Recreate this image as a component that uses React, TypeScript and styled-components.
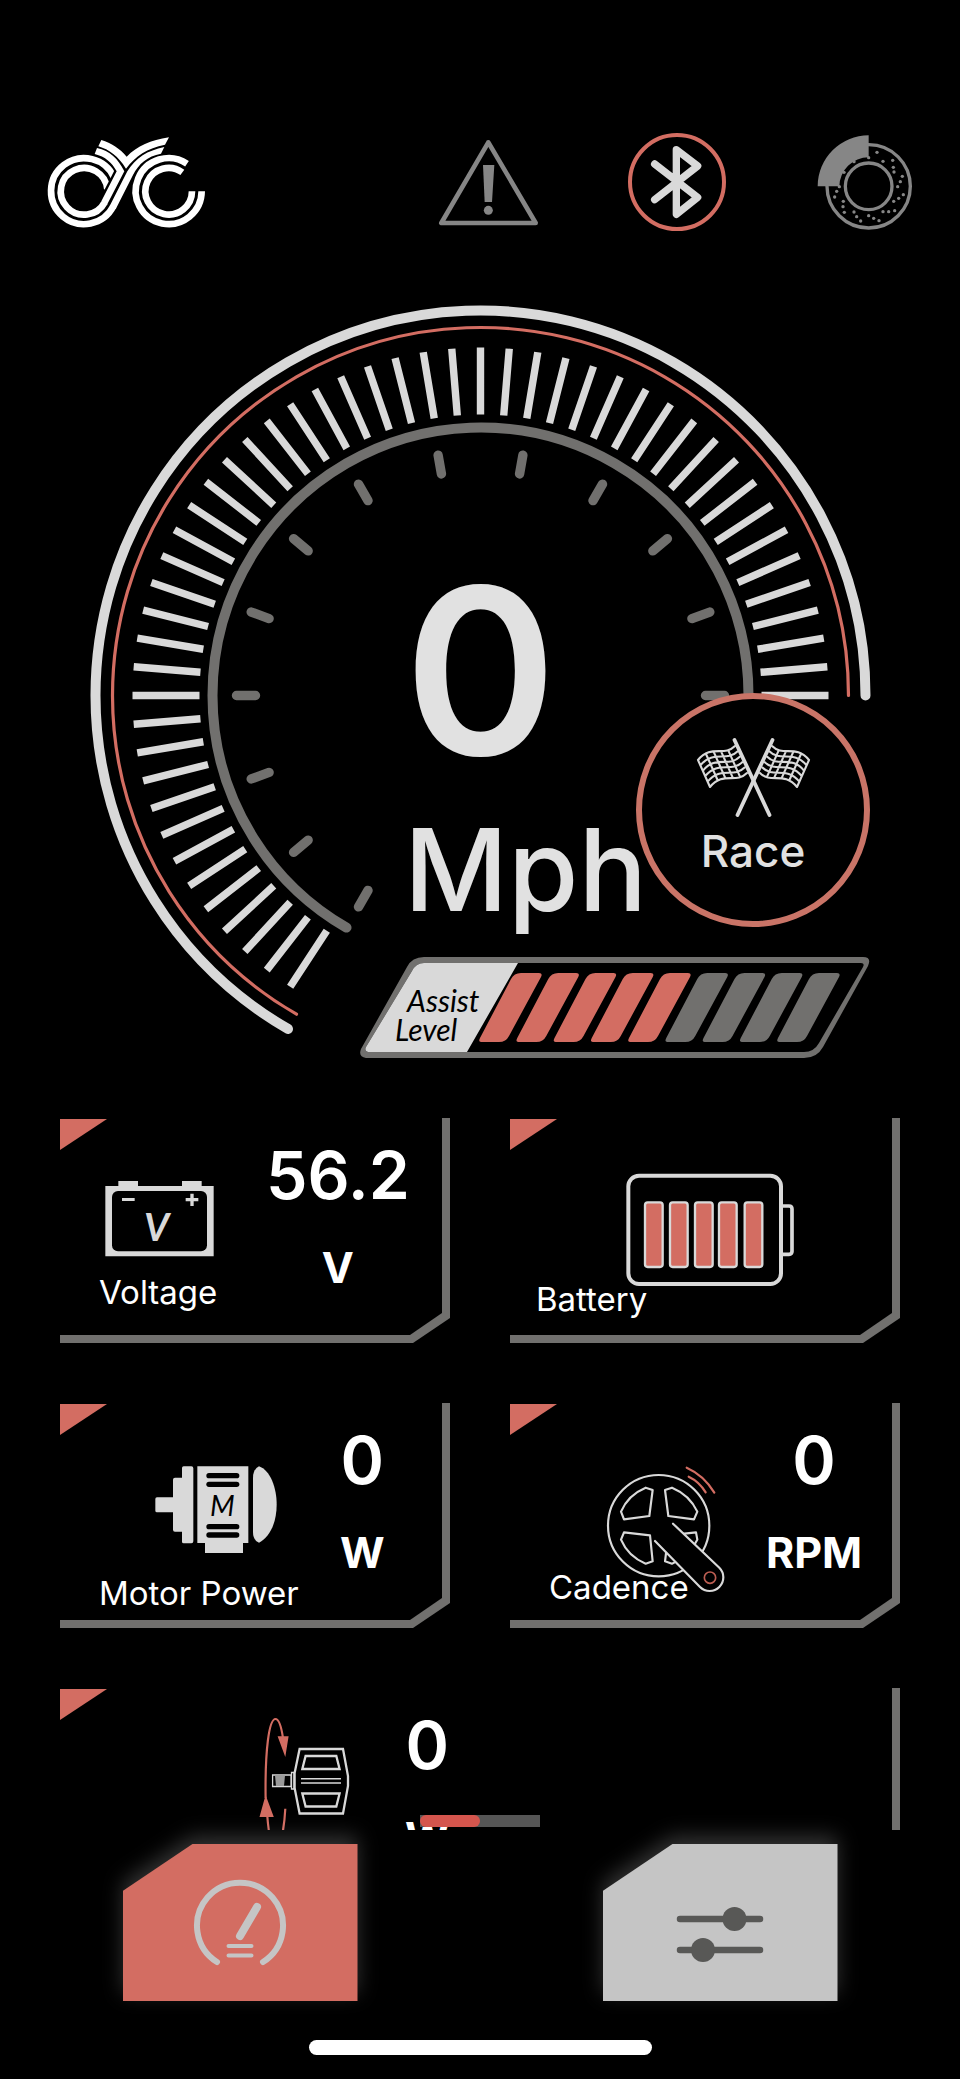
import React from "react";
import styled, { createGlobalStyle } from "styled-components";

const color = {
  bg: "#000000",
  accent: "#d36d62",
  accentSoft: "#c97467",
  light: "#d9d9d9",
  text: "#e1e1e1",
  white: "#ffffff",
  grey: "#71706e",
  icon: "#868686",
  tile: "#c5c5c5",
  dark: "#585856",
};

const GlobalStyle = createGlobalStyle`
  *, *::before, *::after { box-sizing: border-box; }
  html, body { margin: 0; background: ${color.bg}; }
  body { color: ${color.white}; font-family: Inter, "Liberation Sans", sans-serif; }
  button { margin: 0; padding: 0; border: 0; background: none; color: inherit; font: inherit; cursor: pointer; }
  svg { display: block; overflow: visible; flex: none; }
`;

/* ---------- page ---------- */

const Screen = styled.div`
  display: flex;
  flex-direction: column;
  height: 100vh;
  min-height: 1600px;
  overflow: hidden;
  background: ${color.bg};
`;

const Header = styled.header`
  display: flex;
  align-items: center;
  justify-content: space-between;
  padding: 133px 45px 0 47px;
`;

const StatusGroup = styled.div`
  display: flex;
  gap: 91px;
`;

const GaugeArea = styled.section`
  position: relative;
  width: 780px;
  max-width: 100%;
  height: 753px;
  margin: 74px auto 60px;
  flex: none;
  display: grid;
  > * { grid-area: 1 / 1; }
`;

const Readout = styled.div`
  display: flex;
  flex-direction: column;
  gap: 39px;
  padding: 266px 0 0 314px;
  color: ${color.text};
  font-weight: 500;
`;

const Speed = styled.output`
  font-size: 232px;
  font-weight: 600;
  line-height: 200px;
`;

const SpeedUnit = styled.span`
  font-size: 114px;
  line-height: 120px;
`;

const ModeButton = styled.button`
  position: absolute;
  right: 0;
  bottom: 131px;
  display: flex;
  flex-direction: column;
  align-items: center;
  gap: 10px;
  width: 234px;
  height: 234px;
  padding-top: 38px;
  border: 6px solid ${color.accentSoft};
  border-radius: 50%;
  background: ${color.bg};
  color: ${color.text};
  font-size: 44px;
  font-weight: 500;
  line-height: 44px;
`;

const Assist = styled.div`
  position: absolute;
  right: 0;
  bottom: 0;
  width: 510px;
`;

const AssistLabel = styled.span`
  position: absolute;
  top: 29px;
  left: 35px;
  color: #000;
  font: italic 400 30px/29px Lato, sans-serif;
  span { display: block; }
  span:first-child { padding-left: 12px; }
`;

const ListWrap = styled.main`
  position: relative;
  flex: 1;
  min-height: 0;
`;

const CardList = styled.div`
  display: grid;
  grid-template-columns: 1fr 1fr;
  grid-auto-rows: 225px;
  gap: 60px;
  height: 100%;
  padding: 0 60px;
  overflow-y: auto;
  scrollbar-width: none;
  &::-webkit-scrollbar { display: none; }
`;

const Card = styled.article<{ $wide?: boolean }>`
  position: relative;
  z-index: 0;
  display: flex;
  grid-column: ${(p) => (p.$wide ? "1 / -1" : "auto")};
  background: ${color.grey};
  clip-path: polygon(0 0, 100% 0, 100% calc(100% - 25px), calc(100% - 37px) 100%, 0 100%);

  &::before {
    content: "";
    position: absolute;
    z-index: -1;
    inset: 0 8px 8px 0;
    background: ${color.bg};
    clip-path: polygon(0 0, 100% 0, 100% calc(100% - 22px), calc(100% - 32px) 100%, 0 100%);
  }

  &::after {
    content: "";
    position: absolute;
    top: 1px;
    left: 0;
    width: 47px;
    height: 31px;
    background: ${color.accent};
    clip-path: polygon(0 0, 100% 0, 0 100%);
  }
`;

const Figure = styled.div<{ $width: number; $top: number; $left: number }>`
  display: flex;
  flex: none;
  flex-direction: column;
  width: ${(p) => p.$width}px;
  padding-top: ${(p) => p.$top}px;
  > svg { margin-left: ${(p) => p.$left}px; }
`;

const Label = styled.h2<{ $gap: number; $left?: number }>`
  position: relative;
  margin: ${(p) => p.$gap}px 0 0 ${(p) => p.$left ?? 39}px;
  font-size: 33px;
  font-weight: 400;
  line-height: 40px;
  white-space: nowrap;
`;

const Reading = styled.div`
  display: flex;
  flex-direction: column;
  align-items: center;
  gap: 37px;
  padding-top: 27px;
`;

const Value = styled.span`
  font-size: 66px;
  font-weight: 600;
  line-height: 60px;
`;

const Unit = styled.span`
  font-size: 43px;
  font-weight: 700;
  line-height: 50px;
`;

const ScrollProgress = styled.progress`
  position: absolute;
  bottom: 3px;
  left: 50%;
  width: 120px;
  height: 12px;
  transform: translateX(-50%);
  appearance: none;
  border: 0;
  &::-webkit-progress-bar { background: #565656; }
  &::-webkit-progress-value { background: #d4554d; border-radius: 6px; }
`;

const BottomNav = styled.nav`
  display: grid;
  grid-template-columns: 1fr 1fr;
  justify-items: center;
  padding: 14px 0 39px;
`;

const NavButton = styled.button`
  position: relative;
  filter: drop-shadow(0 -8px 10px rgba(255, 255, 255, 0.2));
`;

const NavTile = styled.span<{ $active?: boolean }>`
  display: flex;
  align-items: center;
  justify-content: center;
  width: 235px;
  height: 157px;
  background: ${(p) => (p.$active ? color.accent : color.tile)};
  clip-path: polygon(70px 0, 100% 0, 100% 100%, 0 100%, 0 47px);
`;

const HomeIndicator = styled.div`
  flex: none;
  width: 343px;
  height: 15px;
  margin: 0 auto 24px;
  border-radius: 8px;
  background: ${color.white};
`;

/* ---------- header icons ---------- */

const Logo = () => (
  <svg width="158" height="98" viewBox="51 39 474 294" role="img" aria-label="CYC">
    <g fill="none" stroke="#fff" strokeWidth="20">
      <path d="M252 172 A99 99 0 1 0 250 259" />
      <path d="M232 208 A70 70 0 1 0 224 247" />
      <path d="M471 131 A99 99 0 1 0 515 214" />
      <path d="M457 157 A70 70 0 1 0 486 214" />
    </g>
    <path d="M250 140 L252 154 L206 244 L236 244 L286 154 Z" fill="#000" />
    <g fill="#fff">
      <path d="M417 52 C362 60 322 78 290 110 C270 86 244 69 214 60 L205 79 C238 89 264 108 288 146 C316 108 352 84 405 74 Z" />
      <path d="M201 84 C240 92 264 116 283 154 L231 254 L214 244 L260 154 C246 128 226 110 194 102 Z" />
      <path d="M403 81 C352 92 318 112 292 154 L239 258 L257 268 L309 165 C326 132 352 108 393 101 Z" />
    </g>
  </svg>
);

const WarningIcon = () => (
  <svg width="98" height="98" viewBox="57 39 294 294" role="img" aria-label="Warning">
    <path d="M205 67 L64 309 H347 Z" fill="none" stroke={color.icon} strokeWidth="14" strokeLinejoin="round" />
    <path d="M189 135 H223 L216 246 H194 Z" fill={color.icon} />
    <circle cx="205" cy="271" r="13.5" fill={color.icon} />
  </svg>
);

const BluetoothIcon = () => (
  <svg width="98" height="98" viewBox="625 39 294 294" fill="none" role="img" aria-label="Bluetooth connected">
    <circle cx="772" cy="186" r="141" stroke={color.accent} strokeWidth="12" />
    <path
      d="M705 132 L834 232 L770 283 V89 L834 138 L705 239"
      stroke={color.light}
      strokeWidth="22"
      strokeLinecap="round"
      strokeLinejoin="round"
    />
  </svg>
);

const discHoles = [
  [1370, 97], [1388, 124], [1345, 113], [1417, 121], [1419, 142], [1421, 156], [1446, 169], [1440, 185],
  [1432, 200], [1449, 224], [1435, 235], [1420, 244], [1423, 272], [1405, 275], [1388, 275], [1376, 302],
  [1360, 295], [1345, 287], [1321, 303], [1309, 290], [1301, 276], [1272, 277], [1268, 260], [1269, 244],
  [1243, 231], [1249, 214], [1257, 200], [1271, 157], [1301, 125],
];

const BrakeIcon = () => (
  <svg width="98" height="98" viewBox="1190 39 294 294" role="img" aria-label="Brake">
    <g fill="none" stroke={color.icon} strokeWidth="10">
      <circle cx="1345" cy="199" r="125" />
      <circle cx="1345" cy="199" r="70" />
    </g>
    <path d="M1192 199 A153 153 0 0 1 1345 46 V112 A88 88 0 0 0 1257 199 Z" fill={color.icon} />
    {discHoles.map(([x, y]) => (
      <circle key={`${x}-${y}`} cx={x} cy={y} r="5" fill={color.icon} />
    ))}
  </svg>
);

/* ---------- speed dial ---------- */

const CX = 480.5;
const CY = 695.5;

const polar = (r: number, deg: number) => {
  const a = (deg * Math.PI) / 180;
  return [CX + r * Math.cos(a), CY - r * Math.sin(a)] as const;
};

/* Sweeps from three o'clock over the top down to the lower left. */
const sweep = (r: number) => {
  const [x1, y1] = polar(r, 0);
  const [x2, y2] = polar(r, 240);
  return `M${x1} ${y1} A${r} ${r} 0 1 0 ${x2} ${y2}`;
};

const spoke = (from: number, to: number, deg: number) => {
  const [x1, y1] = polar(from, deg);
  const [x2, y2] = polar(to, deg);
  return `M${x1} ${y1} L${x2} ${y2}`;
};

const majorTicks = Array.from({ length: 51 }, (_, i) => spoke(281, 348, (i * 90) / 19)).join(" ");
const minorTicks = Array.from({ length: 13 }, (_, i) => spoke(225, 244, i * 20)).join(" ");

const Dial = () => (
  <svg width="780" height="732" viewBox="90 305 780 732" fill="none" aria-hidden="true">
    <path d={sweep(385)} stroke={color.light} strokeWidth="10" strokeLinecap="round" />
    <path d={sweep(368)} stroke={color.accent} strokeWidth="3.2" strokeLinecap="round" />
    <path d={majorTicks} stroke={color.light} strokeWidth="7.4" />
    <path d={sweep(268)} stroke={color.grey} strokeWidth="10" strokeLinecap="round" />
    <path d={minorTicks} stroke={color.grey} strokeWidth="9.4" strokeLinecap="round" />
  </svg>
);

/* ---------- ride mode ---------- */

const steps = [0, 0.2, 0.4, 0.6, 0.8, 1];

const flagEdgePoint = (t: number) => {
  const u = 1 - t;
  const mix = (a: number, b: number, c: number, d: number) =>
    u * u * u * a + 3 * u * u * t * b + 3 * u * t * t * c + t * t * t * d;
  return [mix(771, 782, 795, 808), mix(746, 757, 744, 760)];
};

const flagRows = steps.map((s) => {
  const x = -12 * s;
  const y = 27 * s;
  return `M${771 + x} ${746 + y} C${782 + x} ${757 + y} ${795 + x} ${744 + y} ${808 + x} ${760 + y}`;
});

const flagColumns = steps.slice(1).map((t) => {
  const [x, y] = flagEdgePoint(t);
  return `M${x} ${y} l-12 27`;
});

const Flag = () => (
  <g>
    <path d="M771.5 740 L736.5 815" strokeWidth="3.8" />
    <path d={[...flagRows, ...flagColumns].join(" ")} strokeWidth="2.1" />
  </g>
);

const FlagsIcon = () => (
  <svg
    width="115"
    height="82"
    viewBox="695 737 115 82"
    fill="none"
    stroke={color.light}
    strokeLinecap="round"
    strokeLinejoin="round"
    aria-hidden="true"
  >
    <Flag />
    <g transform="translate(1505 0) scale(-1 1)">
      <Flag />
    </g>
  </svg>
);

/* ---------- assist level ---------- */

const ASSIST_STEPS = 9;

const AssistMeter = ({ level }: { level: number }) => (
  <Assist role="meter" aria-label="Assist level" aria-valuemin={0} aria-valuemax={ASSIST_STEPS} aria-valuenow={level}>
    <svg width="510" height="101" viewBox="360 957 510 101" aria-hidden="true">
      <path
        fill={color.grey}
        d="M424 957 H863 Q872 957 868 966 L823 1047 Q817 1058 804 1058 H366 Q358 1057 361 1049 L407 967 Q412 957 424 957 Z"
      />
      <path d="M424 963 H861 Q865 963 863 967 L819 1043 Q814 1052 804 1052 H368 Q364 1051 366 1047 L412 971 Q416 963 424 963 Z" />
      <path fill={color.light} d="M424 963 H518 L467 1052 H368 Q364 1051 366 1047 L412 971 Q416 963 424 963 Z" />
      {Array.from({ length: ASSIST_STEPS }, (_, i) => (
        <path
          key={i}
          transform={`translate(${i * 37.25} 0)`}
          fill={i < level ? color.accent : color.grey}
          d="M481 1042 Q478 1042 480 1038 L511 979 Q514 973 521 973 H539 Q543 973 541 977 L509 1036 Q506 1042 499 1042 Z"
        />
      ))}
    </svg>
    <AssistLabel>
      <span>Assist</span>
      <span>Level</span>
    </AssistLabel>
  </Assist>
);

/* ---------- card icons ---------- */

const VoltageIcon = () => (
  <svg width="109" height="76" viewBox="165 243 327 228" fill={color.light} aria-hidden="true">
    <path d="M166 258 H205 V243 H264 V258 H396 V243 H455 V258 H491 V469 H166 Z" />
    <rect x="186" y="273" width="285" height="181" rx="18" fill="#000" />
    <path d="M216 294 H254 V303 H216 Z M407 294 H445 V304 H407 Z M421 281 H431 V318 H421 Z" />
    <text x="282" y="422" fontFamily="Lato" fontStyle="italic" fontWeight="700" fontSize="116">V</text>
  </svg>
);

const cells = [461, 536, 611, 683, 760];

const BatteryIcon = () => (
  <svg width="168" height="114" viewBox="408 220 504 342" fill="none" stroke={color.light} aria-hidden="true">
    <rect x="415" y="228" width="458" height="325" rx="32" strokeWidth="12" />
    <path d="M878 319 H897 Q906 319 906 328 V455 Q906 464 897 464 H878" strokeWidth="11" />
    {cells.map((x) => (
      <rect key={x} x={x + 4} y="308" width="53" height="194" rx="8" fill={color.accent} strokeWidth="7" />
    ))}
  </svg>
);

const MotorIcon = () => (
  <svg width="122" height="88" viewBox="315 227 366 264" fill={color.light} aria-hidden="true">
    <path d="M321 321 H369 V268 Q369 262 375 262 H396 V233 Q396 228 401 228 H424 Q430 228 430 234 V453 Q430 459 424 459 H401 Q396 459 396 454 V424 H375 Q369 424 369 418 V366 H321 Q316 366 316 361 V326 Q316 321 321 321 Z" />
    <path d="M442 228 H595 V458 H579 V488 H465 V458 H442 Z" />
    <path d="M609 262 Q609 236 627 228 C660 240 680 290 680 343 C680 396 660 440 627 457 Q609 450 609 424 Z" />
    <g fill="#000">
      <rect x="469" y="248" width="99" height="16" rx="8" />
      <rect x="469" y="274" width="99" height="16" rx="8" />
      <rect x="469" y="401" width="99" height="16" rx="8" />
      <rect x="469" y="426" width="99" height="16" rx="8" />
      <text x="480" y="378" fontFamily="Lato" fontStyle="italic" fontSize="86">M</text>
    </g>
  </svg>
);

const CadenceIcon = () => (
  <svg
    width="118"
    height="126"
    viewBox="348 228 354 378"
    fill="none"
    stroke={color.light}
    strokeWidth="6.5"
    strokeLinecap="round"
    strokeLinejoin="round"
    aria-hidden="true"
  >
    <circle cx="506" cy="407" r="152" />
    <path d="M467 293 L488 300 L478 378 L402 388 L393 365 Q414 315 467 293 Z" />
    <path d="M546 293 L525 300 L535 378 L612 388 L622 365 Q599 315 546 293 Z" />
    <path d="M467 521 L488 514 L480 436 L402 427 L393 449 Q414 499 467 521 Z" />
    <path d="M546 521 L525 514 L535 436 L618 427 L622 449 Q599 499 546 521 Z" />
    <path d="M549 401 L688 533 A41 41 0 0 1 630 591 L495 453" fill="#000" />
    <circle cx="660" cy="563" r="17" stroke="#bd5e52" strokeWidth="5" />
    <path d="M590 233 Q642 256 673 308 M596 260 Q628 275 647 307" stroke={color.accent} />
  </svg>
);

const PedalIcon = () => (
  <svg width="90" height="132" viewBox="259 1718 90 132" fill="none" aria-hidden="true">
    <g stroke={color.accent} strokeWidth="2.2">
      <path d="M265.6 1798 C265 1750 269 1719 275.5 1719 C279 1719 281.5 1728 283 1738" />
      <path d="M267.2 1815 C269 1838 272 1848 275.5 1848 C280 1848 284 1832 285.3 1808.7" />
    </g>
    <path d="M265.6 1795 L273.8 1817 H259.5 Z M285.3 1757 L277.6 1736.3 H288.6 Z" fill={color.accent} />
    <g stroke={color.light} strokeWidth="2.3">
      <path d="M299.6 1749 H343 L348 1776 V1786 L343 1813.5 H299.6 L294.6 1788 V1773 Z" />
      <path d="M305.6 1756 H336.3 L339.6 1769 H302.3 Z M302.3 1793.5 H339.6 L336.3 1806.5 H305.6 Z" />
      <path d="M301 1778.7 H341 M301 1783 H341" strokeWidth="1.6" />
      <path d="M272.6 1775 H291 V1786.5 H272.6 Z M291.5 1772.5 H294 V1789 H291.5 Z" strokeWidth="1.3" />
    </g>
    <path d="M275 1775.5 H285 L284 1786 H276 Z" fill="#9a9a9a" />
  </svg>
);

/* ---------- navigation icons ---------- */

const DashboardIcon = () => (
  <svg width="92" height="87" viewBox="193.5 1879 92 87" fill="none" stroke={color.tile} strokeLinecap="round" aria-hidden="true">
    <path d="M216.5 1962 A43 43 0 1 1 262.5 1962" strokeWidth="6" />
    <path d="M239.5 1936 L256.5 1907" strokeWidth="8" />
    <path d="M228 1946 H251 M228 1955.5 H251" strokeWidth="4" />
  </svg>
);

const SettingsIcon = () => (
  <svg width="86" height="32" viewBox="677 1907 86 32" aria-hidden="true">
    <path d="M680 1919 H760 M680 1950 H760" stroke={color.dark} strokeWidth="6.5" strokeLinecap="round" />
    <circle cx="734.5" cy="1919" r="12" fill={color.dark} />
    <circle cx="703" cy="1950" r="12" fill={color.dark} />
  </svg>
);

const App = () => (
  <>
    <GlobalStyle />
    <Screen>
      <Header>
        <Logo />
        <StatusGroup>
          <WarningIcon />
          <BluetoothIcon />
          <BrakeIcon />
        </StatusGroup>
      </Header>

      <GaugeArea>
        <Dial />
        <Readout>
          <Speed>0</Speed>
          <SpeedUnit>Mph</SpeedUnit>
        </Readout>
        <ModeButton type="button">
          <FlagsIcon />
          Race
        </ModeButton>
        <AssistMeter level={5} />
      </GaugeArea>

      <ListWrap>
        <CardList>
          <Card>
            <Figure $width={206} $top={63} $left={45}>
              <VoltageIcon />
              <Label $gap={15}>Voltage</Label>
            </Figure>
            <Reading>
              <Value>56.2</Value>
              <Unit>V</Unit>
            </Reading>
          </Card>
          <Card>
            <Figure $width={290} $top={55} $left={116}>
              <BatteryIcon />
              <Label $gap={-8} $left={26}>Battery</Label>
            </Figure>
          </Card>
          <Card>
            <Figure $width={280} $top={63} $left={95}>
              <MotorIcon />
              <Label $gap={19}>Motor Power</Label>
            </Figure>
            <Reading>
              <Value>0</Value>
              <Unit>W</Unit>
            </Reading>
          </Card>
          <Card>
            <Figure $width={256} $top={63} $left={96}>
              <CadenceIcon />
              <Label $gap={-25}>Cadence</Label>
            </Figure>
            <Reading>
              <Value>0</Value>
              <Unit>RPM</Unit>
            </Reading>
          </Card>
          <Card $wide>
            <Figure $width={345} $top={30} $left={199}>
              <PedalIcon />
            </Figure>
            <Reading>
              <Value>0</Value>
              <Unit>W</Unit>
            </Reading>
          </Card>
        </CardList>
        <ScrollProgress value={50} max={100} aria-label="Scroll position" />
      </ListWrap>

      <BottomNav>
        <NavButton type="button" aria-label="Dashboard">
          <NavTile $active>
            <DashboardIcon />
          </NavTile>
        </NavButton>
        <NavButton type="button" aria-label="Settings">
          <NavTile>
            <SettingsIcon />
          </NavTile>
        </NavButton>
      </BottomNav>
      <HomeIndicator />
    </Screen>
  </>
);

export default App;
